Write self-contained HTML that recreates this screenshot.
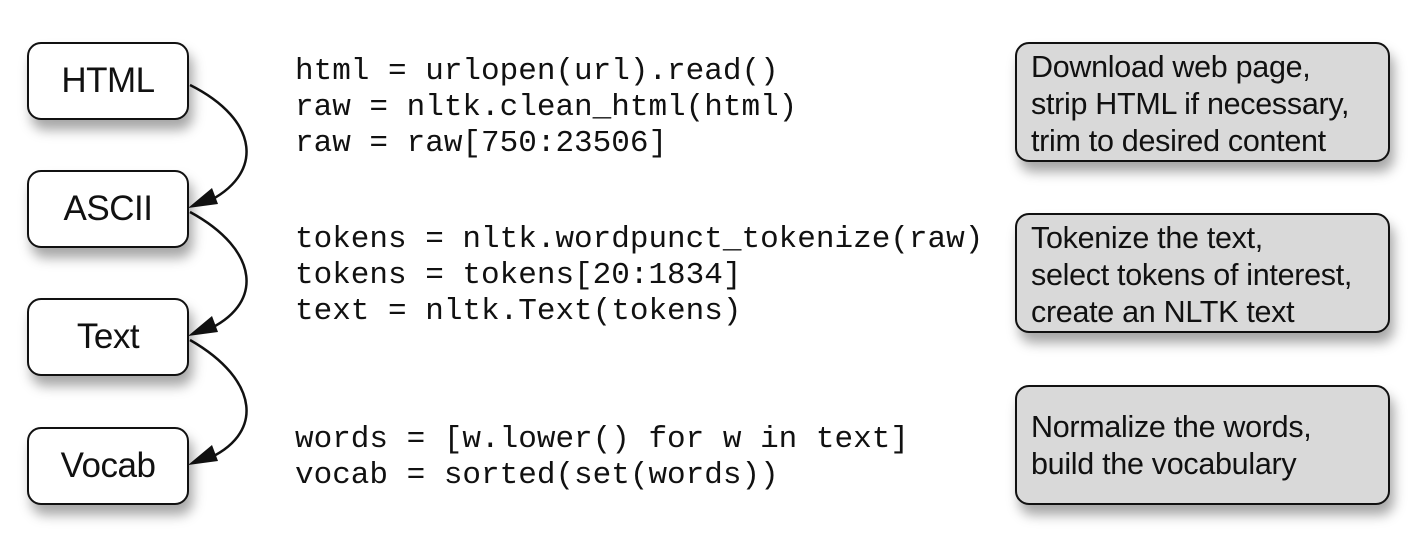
<!DOCTYPE html>
<html><head><meta charset="utf-8"><style>
body{margin:0;width:1412px;height:542px;background:#fff;position:relative;overflow:hidden;font-family:"Liberation Sans",sans-serif}
.lb{position:absolute;left:27px;width:158px;height:74px;border:2.5px solid #111;border-radius:14px;background:#fff;box-shadow:4px 10px 12px rgba(0,0,0,.35);display:flex;align-items:center;justify-content:center;font-size:35px;color:#111;letter-spacing:-0.5px}
.rb{position:absolute;left:1015px;width:375px;height:120px;border:2.5px solid #111;border-radius:14px;background:#d9d9d9;box-shadow:4px 10px 12px rgba(0,0,0,.35);font-size:30.5px;line-height:37px;color:#111;padding:5px 0 0 14px;box-sizing:border-box;letter-spacing:-0.3px;white-space:nowrap}
.code{position:absolute;left:295px;font-family:"Liberation Mono",monospace;font-size:31px;line-height:36px;color:#111;white-space:pre}
</style></head><body>
<svg style="position:absolute;left:0;top:0" width="1412" height="542">
<g fill="none" stroke="#111" stroke-width="2.5">
<path d="M190,85 C260,120 265,175 205,203"/>
<path d="M190,212 C260,250 265,305 205,331"/>
<path d="M190,340 C260,380 265,435 205,460"/>
</g>
<g fill="#111">
<polygon points="188,208 212,188 218,204"/>
<polygon points="188,336 212,316 218,332"/>
<polygon points="188,465 212,445 218,461"/>
</g>
</svg>
<div class="lb" style="top:42px">HTML</div>
<div class="lb" style="top:170px">ASCII</div>
<div class="lb" style="top:298px">Text</div>
<div class="lb" style="top:427px">Vocab</div>
<div class="code" style="top:54px">html = urlopen(url).read()
raw = nltk.clean_html(html)
raw = raw[750:23506]</div>
<div class="code" style="top:222px">tokens = nltk.wordpunct_tokenize(raw)
tokens = tokens[20:1834]
text = nltk.Text(tokens)</div>
<div class="code" style="top:422px">words = [w.lower() for w in text]
vocab = sorted(set(words))</div>
<div class="rb" style="top:42px">Download web page,<br>strip HTML if necessary,<br>trim to desired content</div>
<div class="rb" style="top:213px">Tokenize the text,<br>select tokens of interest,<br>create an NLTK text</div>
<div class="rb" style="top:385px;padding-top:22px">Normalize the words,<br>build the vocabulary</div>
</body></html>
